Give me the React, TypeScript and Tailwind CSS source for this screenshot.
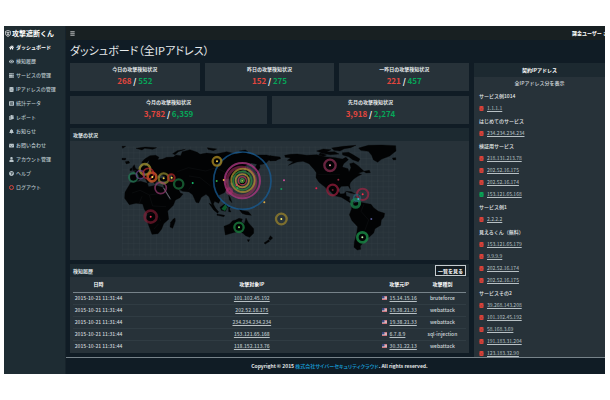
import {
  FaBars,
  FaBell,
  FaCopy,
  FaDatabase,
  FaEnvelope,
  FaEye,
  FaHome,
  FaListAlt,
  FaQuestionCircle,
  FaServer,
  FaUser,
} from "react-icons/fa";
import type { ReactNode } from "react";

const menu = [
  { label: "ダッシュボード", icon: <FaHome />, active: true },
  { label: "検知履歴", icon: <FaEye /> },
  { label: "サービスの管理", icon: <FaServer /> },
  { label: "IPアドレスの管理", icon: <FaDatabase /> },
  { label: "統計データ", icon: <FaListAlt /> },
  { label: "レポート", icon: <FaCopy /> },
  { label: "お知らせ", icon: <FaBell /> },
  { label: "お問い合わせ", icon: <FaEnvelope /> },
  { label: "アカウント管理", icon: <FaUser /> },
  { label: "ヘルプ", icon: <FaQuestionCircle /> },
  {
    label: "ログアウト",
    icon: <span className="block size-[5px] rounded-full border border-[#d8453c]" />,
  },
];

const services = [
  { name: "サービス例1014", ips: ["1.1.1.1"] },
  { name: "はじめてのサービス", ips: ["234.234.234.234"] },
  {
    name: "検証用サービス",
    ips: ["218.131.213.78", "202.52.16.175", "202.52.16.174", "153.121.65.168"],
  },
  { name: "サービス例1", ips: ["2.2.2.2"] },
  {
    name: "見えるくん（無料）",
    ips: ["153.121.65.179", "9.9.9.9", "202.52.16.174", "202.52.16.175"],
  },
  {
    name: "サービスその2",
    ips: ["39.268.143.208", "101.102.45.192", "58.168.3.69", "191.183.31.204", "123.183.32.90"],
  },
];

const safeIp = "153.121.65.168";

const history = [
  { target: "101.102.45.192", source: "15.14.15.16", type: "bruteforce" },
  { target: "202.52.16.175", source: "19.38.21.33", type: "webattack" },
  { target: "234.234.234.234", source: "19.38.21.33", type: "webattack" },
  { target: "153.121.65.168", source: "6.7.8.9", type: "sql-injection" },
  { target: "118.152.113.76", source: "30.31.22.13", type: "webattack" },
];

const land = [
  // Eurasia
  "M62 137L60 121L76 119L74 109L85 103L96 96L99 88L95 82L104 72L120 62L137 61L147 67L143 74L158 72L170 67L190 66L198 60L212 62L217 50L240 44L262 52L270 58L290 54L318 57L350 50L380 57L402 52L432 60L470 60L506 70L498 77L476 76L466 86L449 89L450 98L440 113L434 100L441 88L424 84L406 92L400 105L389 110L380 120L370 123L369 142L361 143L358 130L348 132L342 139L350 147L351 161L343 173L326 181L331 194L326 205L314 199L310 207L321 229L313 225L304 204L297 185L288 178L274 187L266 204L258 202L248 179L237 171L218 169L205 162L211 174L219 177L210 188L188 199L180 187L163 160L160 150L169 146L168 138L140 139L134 146L125 136L113 125L120 140L113 145L104 128L94 129L80 140Z",
  // Africa
  "M62 143L92 139L112 145L116 155L137 151L157 157L167 174L179 194L197 193L190 211L173 228L176 253L161 266L155 282L144 296L126 298L117 274L109 252L112 237L103 223L98 207L78 205L58 209L44 190L45 172Z",
  "M190 252L195 249L196 258L188 280L180 276L182 262Z",
  // Britain, Iceland, arctic isles
  "M70 107L68 96L73 89L76 99L82 104ZM60 102L67 98L67 106L60 107ZM46 80L56 78L59 84L49 87ZM36 34L47 34L38 40ZM36 70L48 70L46 75L36 74ZM78 40L106 36L140 38L128 43L104 40L96 45ZM188 56L202 47L226 43L205 50L195 59ZM292 38L320 42L310 47L294 43ZM388 48L406 45L414 50L399 53Z",
  // Japan, Sakhalin
  "M409 95L414 109L411 119L408 105ZM408 119L421 122L411 129ZM409 131L407 144L393 151L384 152L383 148L397 142Z",
  // south-east Asia
  "M297 205L306 209L326 230L323 235L311 225ZM321 237L344 241L342 245L321 241ZM330 217L347 205L353 214L346 229L334 226ZM356 181L361 188L366 203L358 195ZM356 216L363 216L358 221L363 231L356 230ZM386 221L401 227L415 230L424 241L408 239L396 235ZM354 170L357 164L357 173Z",
  // Oceania
  "M342 274L359 267L368 257L377 255L387 250L397 252L394 261L403 266L408 249L415 263L431 281L431 295L419 307L407 302L399 295L386 289L367 294L346 300ZM412 314L419 314L415 321ZM481 302L488 309L481 316L476 312ZM476 314L479 319L466 327L462 324Z",
  // North America
  "M524 61L542 58L562 57L590 61L620 59L645 65L676 68L697 72L708 67L715 74L701 86L697 96L714 101L717 111L723 98L719 86L731 83L744 92L754 101L762 109L744 115L755 118L743 124L730 133L721 143L719 150L721 163L715 153L694 154L684 165L691 177L702 176L707 170L709 183L719 186L718 197L731 203L726 207L711 197L694 187L674 182L658 166L650 155L656 173L646 157L627 142L618 128L619 113L613 104L597 86L579 79L561 81L535 91L550 80L532 76L542 69L526 67Z",
  "M480 62L510 66L512 71L496 76L480 78Z",
  "M620 48L640 42L663 44L650 51L674 50L687 57L661 59L637 55ZM665 39L700 34L738 31L722 38L703 41L690 48L672 46ZM697 53L716 52L732 61L750 72L745 80L728 74L716 65L698 60ZM630 54L650 60L641 64L627 60ZM761 109L778 106L781 113L768 114Z",
  // Greenland
  "M746 39L775 31L815 30L857 32L858 48L839 63L814 73L803 82L790 74L785 61L775 49L752 46ZM847 69L857 68L858 74L850 75Z",
  // Caribbean
  "M707 169L724 170L735 176L721 174ZM737 178L749 179L745 183Z",
  // South America
  "M727 207L742 201L758 203L783 208L791 218L805 229L824 235L822 246L814 255L812 271L795 281L791 294L778 306L768 311L761 322L751 333L752 343L742 345L732 337L733 321L740 295L743 275L726 257L718 239L724 224Z",
];

const rings = [
  { x: 397, y: 137, r: 86, w: 5, c: "#175c96", o: 0.75 },
  { x: 397, y: 137, r: 53, w: 6, c: "#a93680", o: 0.8 },
  { x: 394, y: 140, r: 43, w: 9, c: "#a52d61", o: 0.55 },
  { x: 399, y: 136, r: 35, w: 6, c: "#a58b32", o: 0.8 },
  { x: 397, y: 137, r: 28, w: 5, c: "#29813d", o: 0.85 },
  { x: 397, y: 137, r: 20, w: 5, c: "#b49735", o: 0.8 },
  { x: 397, y: 137, r: 12, w: 4, c: "#b93b54", o: 0.8 },
  { x: 397, y: 137, r: 6, w: 3, c: "#48a442", o: 0.9 },
  { x: 358, y: 168, r: 7, w: 8, c: "#b22d71", o: 0.5 },
  { x: 321, y: 79, r: 13, w: 7, c: "#a48520", o: 0.8 },
  { x: 514, y: 252, r: 16, w: 7, c: "#99832b", o: 0.75 },
  { x: 387, y: 277, r: 14, w: 7, c: "#18743a", o: 0.85 },
  { x: 122, y: 245, r: 18, w: 8, c: "#861b34", o: 0.65 },
  { x: 70, y: 127, r: 13, w: 6, c: "#247c55", o: 0.7 },
  { x: 105, y: 103, r: 16, w: 7, c: "#a79830", o: 0.75 },
  { x: 91, y: 119, r: 12, w: 5, c: "#71418d", o: 0.7 },
  { x: 126, y: 126, r: 13, w: 8, c: "#cf5925", o: 0.8 },
  { x: 115, y: 116, r: 16, w: 5, c: "#c12e36", o: 0.65 },
  { x: 161, y: 130, r: 15, w: 7, c: "#958f2d", o: 0.7 },
  { x: 152, y: 159, r: 17, w: 5, c: "#983c73", o: 0.7 },
  { x: 184, y: 128, r: 10, w: 6, c: "#bd2929", o: 0.65 },
  { x: 206, y: 147, r: 14, w: 7, c: "#1e7740", o: 0.7 },
  { x: 660, y: 91, r: 17, w: 7, c: "#812c4d", o: 0.8 },
  { x: 668, y: 165, r: 16, w: 7, c: "#961d3b", o: 0.75 },
  { x: 758, y: 178, r: 17, w: 6, c: "#9a2643", o: 0.75 },
  { x: 737, y: 205, r: 12, w: 9, c: "#188047", o: 0.8 },
  { x: 741, y: 189, r: 10, w: 5, c: "#216f81", o: 0.6 },
  { x: 757, y: 307, r: 15, w: 8, c: "#198544", o: 0.85 },
];

const dots = [
  { x: 397, y: 137, c: "#8cc63f" },
  { x: 321, y: 79, c: "#f4ce48" },
  { x: 514, y: 252, c: "#fff06a" },
  { x: 387, y: 277, c: "#70e06d" },
  { x: 122, y: 245, c: "#e53252" },
  { x: 127, y: 126, c: "#fff45c" },
  { x: 185, y: 128, c: "#ffe34b" },
  { x: 161, y: 130, c: "#e8cc46" },
  { x: 248, y: 144, c: "#15b96a" },
  { x: 320, y: 138, c: "#2fac44" },
  { x: 341, y: 135, c: "#e9a949" },
  { x: 380, y: 150, c: "#de3f68" },
  { x: 382, y: 160, c: "#2bad4e" },
  { x: 463, y: 202, c: "#dfac45" },
  { x: 522, y: 136, c: "#d04e9c" },
  { x: 514, y: 162, c: "#199a59" },
  { x: 660, y: 91, c: "#f290ab" },
  { x: 685, y: 134, c: "#8e263f" },
  { x: 619, y: 160, c: "#e91f4c" },
  { x: 668, y: 165, c: "#701b2b" },
  { x: 758, y: 178, c: "#ff2c4b" },
  { x: 745, y: 192, c: "#47b6d2" },
  { x: 757, y: 307, c: "#b9f2a7" },
  { x: 784, y: 252, c: "#535894" },
];

const Stat = ({ title, bad, good }: { title: string; bad: string; good: string }) => (
  <div className="flex h-7 flex-1 flex-col items-center bg-[#273239] pt-[3px]">
    <h2 className="text-[5px] leading-[6px] font-bold text-[#e4e8e9]">{title}</h2>
    <p className="mt-1 text-[8px] leading-[10px] font-bold text-white">
      <span className="text-[#e3463e]">{bad}</span>
      {" / "}
      <span className="text-[#06a658]">{good}</span>
    </p>
  </div>
);

const CardHeader = ({ title, children }: { title: string; children?: ReactNode }) => (
  <div className="flex h-[13px] shrink-0 items-center justify-between bg-[#1c2930] px-[3px]">
    <h2 className="text-[5px] leading-[6px] font-bold text-[#dfe4e6]">{title}</h2>
    {children}
  </div>
);

const AttackMap = () => (
  <svg viewBox="-120 18 1197 357" className="block w-full" role="img" aria-label="攻撃の状況">
    <defs>
      <pattern id="grid" x="36" y="18" width="17" height="17" patternUnits="userSpaceOnUse">
        <path d="M0 0H17M0 0V17" stroke="#323e45" strokeWidth="2" fill="none" />
      </pattern>
    </defs>
    <rect x="36" y="34" width="823" height="330" fill="url(#grid)" />
    <g fill="#020304" stroke="#020304" strokeWidth="1" strokeLinejoin="round">
      {land.map((d) => (
        <path key={d} d={d} />
      ))}
    </g>
    {/* inland seas */}
    <path
      d="M143 123L153 119L166 125L158 130L145 129ZM178 119L185 118L188 134L182 136ZM108 85L118 76L113 91L103 94Z"
      fill="#273239"
    />
    <path
      d="M66 174L90 166L118 180L146 176M88 204L96 184M118 180L128 213L168 215M112 238L139 232L152 258M132 282L145 267M202 110L235 98L287 108L318 98L350 114M237 123L270 128L302 153M236 164L250 145M648 78V101M625 119H690M762 207L753 229L776 255L765 285"
      fill="none"
      stroke="#171b1d"
      strokeWidth="1"
    />
    <path d="M161 159L180 190" stroke="#64606b" strokeWidth="3" />
    <path d="M334 222L346 207L352 217L345 228Z" fill="#0c5a2c" />
    <g fill="none">
      {rings.map((r, i) => (
        <circle key={i} cx={r.x} cy={r.y} r={r.r} stroke={r.c} strokeWidth={r.w} opacity={r.o} />
      ))}
    </g>
    {dots.map((d, i) => (
      <circle key={i} cx={d.x} cy={d.y} r="3" fill={d.c} />
    ))}
  </svg>
);

const Flag = () => (
  <svg viewBox="0 0 10 8" className="h-1 w-[5px] shrink-0">
    <path d="M0 0H10V8H0Z" fill="#e9e6ea" />
    <path d="M5 1H10M5 4H10M0 7H10" stroke="#c84b55" strokeWidth="1.4" />
    <path d="M0 0H5V5H0Z" fill="#39477f" />
  </svg>
);

const Sidebar = () => (
  <aside className="w-[61px] shrink-0 bg-[#1e2c33]">
    <a href="#" className="flex h-[14px] items-center gap-px bg-[#202c31] pl-px text-white">
      <svg viewBox="0 0 14 16" className="h-[7px] w-[6px] shrink-0" fill="none" stroke="currentColor">
        <path d="M7 1L13 3V9Q12 13 7 15Q2 13 1 9V3Z" strokeWidth="1.6" />
        <path d="M3 6H11M7 4V13M4 10H10" strokeWidth="1.5" />
      </svg>
      <span className="text-[7px] leading-[10px] font-bold whitespace-nowrap">攻撃遮断くん</span>
    </a>
    <nav>
      {menu.map((m) => (
        <a
          key={m.label}
          href="#"
          className={`flex h-[14px] items-center gap-[2px] pl-1 text-[5px] leading-[6px] whitespace-nowrap ${
            m.active ? "font-bold text-white" : "font-medium text-[#bac6cb]"
          }`}
        >
          <span className="flex w-[6px] justify-center">{m.icon}</span>
          {m.label}
        </a>
      ))}
    </nav>
  </aside>
);

const IpPanel = () => (
  <aside className="flex w-[131px] shrink-0 flex-col overflow-hidden bg-[#273239] text-[5px] leading-[6px] text-[#d4dadd]">
    <h2 className="flex h-[14px] shrink-0 items-center justify-center bg-[#1c2930] font-bold text-white">
      契約IPアドレス
    </h2>
    <a href="#" className="flex h-3 shrink-0 items-center justify-center font-medium">
      全IPアドレス分を表示
    </a>
    {services.map((s) => (
      <section key={s.name} className="shrink-0 pl-[5px]">
        <h3 className="flex h-[13px] items-center font-medium text-[#e4e8e9]">{s.name}</h3>
        <ul>
          {s.ips.map((ip) => (
            <li key={ip} className="flex h-3 items-center gap-[3px]">
              <FaDatabase
                className={`size-[5px] shrink-0 ${ip === safeIp ? "text-[#08a657]" : "text-[#dc4239]"}`}
              />
              <a href="#" className="text-[#b8c1c5] underline">
                {ip}
              </a>
            </li>
          ))}
        </ul>
      </section>
    ))}
  </aside>
);

const HistoryTable = () => (
  <div className="px-[3px] pb-px">
    <table className="w-full table-fixed border-collapse text-center text-[5px] leading-[6px] font-medium text-[#d0d6d9]">
      <thead>
        <tr className="h-[15px] border-b border-[#77838a] text-white">
          <th className="w-[13%]">日時</th>
          <th className="w-[65%]">攻撃対象IP</th>
          <th className="w-[10%]">攻撃元IP</th>
          <th className="w-[12%]">攻撃種別</th>
        </tr>
      </thead>
      <tbody>
        {history.map((h) => (
          <tr key={h.target} className="h-3 border-b border-[#303c43] last:border-b-0">
            <td className="whitespace-nowrap">2015-10-21 11:31:44</td>
            <td>
              <a href="#" className="text-[#b8c1c5] underline">
                {h.target}
              </a>
            </td>
            <td>
              <div className="flex items-center gap-[3px] pl-[2px]">
                <Flag />
                <a href="#" className="text-[#b8c1c5] underline">
                  {h.source}
                </a>
              </div>
            </td>
            <td>{h.type}</td>
          </tr>
        ))}
      </tbody>
    </table>
  </div>
);

export default function App() {
  return (
    <div className="h-screen bg-white py-[26px] pr-[5px] pl-1 font-['Noto_Sans_CJK_JP',sans-serif]">
      <div className="flex h-full overflow-hidden bg-[#101c25]">
        <Sidebar />
        <div className="flex min-w-0 flex-1 flex-col border-l border-[#17232b]">
          <header className="flex h-[14px] shrink-0 items-center justify-between overflow-hidden bg-[#182022] pl-1 text-[5px] text-white">
            <button aria-label="メニュー">
              <FaBars />
            </button>
            <span className="-mr-[3px] leading-[6px] font-bold whitespace-nowrap">課金ユーザー さ</span>
          </header>
          <div className="flex min-h-0 flex-1 flex-col pl-1">
            <h1 className="h-[23px] shrink-0 text-[11px] leading-[21px] text-[#e6eaec] [font-feature-settings:'palt']">
              ダッシュボード（全IPアドレス）
            </h1>
            <div className="flex min-h-0 flex-1 gap-[5px]">
              <main className="flex min-w-0 flex-1 flex-col gap-1">
                <div className="flex flex-col gap-[5px]">
                  <div className="flex gap-[5px]">
                    <Stat title="今日の攻撃検知状況" bad="268" good="552" />
                    <Stat title="昨日の攻撃検知状況" bad="152" good="275" />
                    <Stat title="一昨日の攻撃検知状況" bad="221" good="457" />
                  </div>
                  <div className="flex gap-[5px]">
                    <Stat title="今月の攻撃検知状況" bad="3,782" good="6,359" />
                    <Stat title="先月の攻撃検知状況" bad="3,918" good="2,274" />
                  </div>
                </div>
                <section className="bg-[#273239]">
                  <CardHeader title="攻撃の状況" />
                  <AttackMap />
                </section>
                <section className="bg-[#273239]">
                  <CardHeader title="検知履歴">
                    <button className="h-[11px] border border-[#c5ccd0] bg-[#141d22] px-[2px] text-[5px] leading-[6px] font-bold text-white">
                      一覧を見る
                    </button>
                  </CardHeader>
                  <HistoryTable />
                </section>
              </main>
              <IpPanel />
            </div>
          </div>
          <footer className="flex h-[17px] shrink-0 items-center justify-center border-t border-[#77838a] pl-2 text-[5px] leading-[6px] font-bold text-[#e4e8e9] [font-feature-settings:'palt']">
            <p>
              Copyright © 2015{" "}
              <a href="#" className="text-[#168fc4]">
                株式会社サイバーセキュリティクラウド
              </a>
              . All rights reserved.
            </p>
          </footer>
        </div>
      </div>
    </div>
  );
}
